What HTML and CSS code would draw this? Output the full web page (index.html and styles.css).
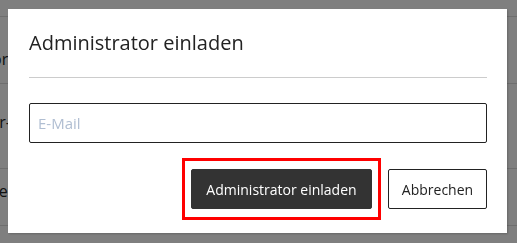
FILE: index.html
```html
<!DOCTYPE html>
<html lang="de">
	<head>
		<meta charset="UTF-8" />
		<meta name="viewport" content="width=device-width, initial-scale=1.0" />
		<title>Administratoren</title>
		<link rel="stylesheet" href="styles.css">
	</head>
	<body>
		<div class="page">
			<div class="row row-head"></div>
			<div class="row row-1"><span>Administrator</span></div>
			<div class="row row-2"><span>Benutzer-</span></div>
			<div class="row row-3"><span>Name</span></div>
		</div>
		<div class="overlay">
			<div class="modal">
				<h1 class="modal-title">Administrator einladen</h1>
				<div class="modal-body">
					<input type="email" class="email-input" placeholder="E-Mail" />
				</div>
				<div class="modal-footer">
					<div class="highlight">
						<button class="btn btn-primary">Administrator einladen</button>
					</div>
					<button class="btn btn-default">Abbrechen</button>
				</div>
			</div>
		</div>
	</body>
</html>
```

FILE: styles.css
```css
* {
	margin: 0;
	padding: 0;
	box-sizing: border-box;
}
body {
	background-color: rgb(255, 255, 255);
	color: rgb(34, 34, 34);
	font-family: "Open Sans", "Noto Sans", sans-serif;
	overflow: hidden;
	height: 243px;
}
.page {
	width: 100%;
}
.row {
	border-bottom: 1px solid rgb(220, 220, 220);
	font-size: 16px;
	white-space: nowrap;
}
.row > span {
	display: inline-block;
}
.row-head {
	height: 17px;
}
.row-1 {
	height: 67px;
	padding-top: 31px;
}
.row-1 > span {
	margin-left: -95px;
}
.row-2 {
	height: 85px;
	padding-top: 27px;
}
.row-2 > span {
	margin-left: -62px;
}
.row-3 {
	height: 57px;
	padding-top: 11px;
}
.row-3 > span {
	margin-left: -37px;
}
.overlay {
	position: fixed;
	top: 0;
	left: 0;
	right: 0;
	bottom: 0;
	background-color: rgba(0, 0, 0, 0.5);
	padding: 9px 10px 0 8px;
}
.modal {
	width: 499px;
	height: 224px;
	background-color: rgb(255, 255, 255);
	padding: 0 20px 0 21px;
	box-shadow: 1px 1px 2px rgba(0, 0, 0, 0.2);
}
.modal-title {
	font-size: 20px;
	font-weight: 400;
	line-height: 30px;
	color: rgb(34, 34, 34);
	padding: 19px 0 19px 0;
	border-bottom: 1px solid rgb(204, 204, 204);
}
.modal-body {
	padding-top: 25px;
}
.email-input {
	display: block;
	width: 100%;
	height: 40px;
	border: 1px solid rgb(34, 34, 34);
	border-radius: 2px;
	padding: 0 8px;
	font-family: inherit;
	font-size: 15px;
	color: rgb(34, 34, 34);
	outline: none;
}
.email-input::placeholder {
	color: rgb(176, 190, 210);
}
.modal-footer {
	display: flex;
	justify-content: flex-end;
	align-items: center;
	gap: 7px;
	padding-top: 15px;
}
.highlight {
	border: 3px solid rgb(255, 0, 0);
	padding: 8px 6px;
}
.btn {
	height: 40px;
	border-radius: 2px;
	font-family: inherit;
	font-size: 14px;
	cursor: pointer;
}
.btn-primary {
	width: 181px;
	background-color: rgb(51, 51, 51);
	color: rgb(255, 255, 255);
	border: 1px solid rgb(51, 51, 51);
}
.btn-default {
	width: 99px;
	background-color: rgb(255, 255, 255);
	color: rgb(34, 34, 34);
	border: 1px solid rgb(34, 34, 34);
}
```
